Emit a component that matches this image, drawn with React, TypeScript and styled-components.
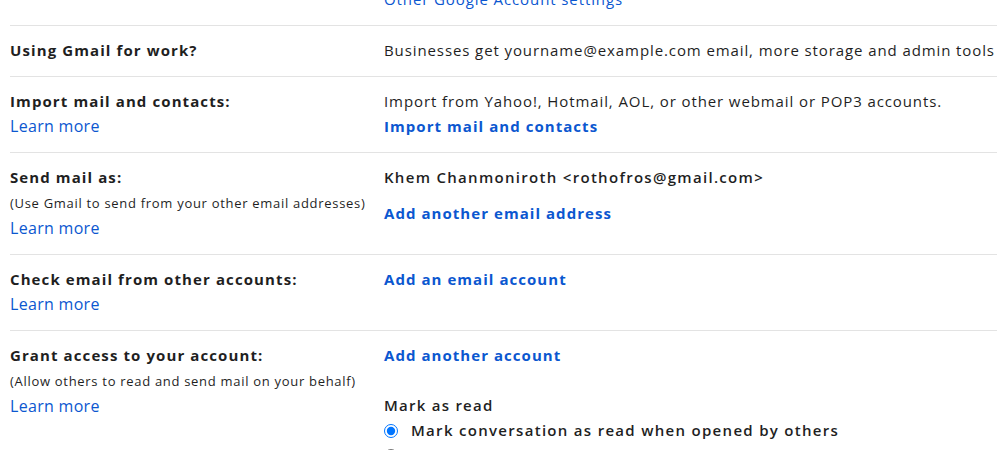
import React from "react";
import styled, { createGlobalStyle } from "styled-components";

const Global = createGlobalStyle`
  html, body {
    margin: 0;
    padding: 0;
    overflow: hidden;
    background: #ffffff;
  }
  body {
    font-family: "Open Sans", "Liberation Sans", sans-serif;
    color: #1f1f1f;
  }
`;

const Page = styled.div`
  margin-top: -75px;
  padding-left: 10px;
  width: 1300px;
`;

const Row = styled.div`
  display: grid;
  grid-template-columns: 374px 1fr;
  padding: 12px 0 13px;
  border-bottom: 1px solid #e3e3e3;
  line-height: 25px;
`;

const LabelCol = styled.div`
  display: flex;
  flex-direction: column;
`;

const Label = styled.div`
  font-size: 15px;
  font-weight: 700;
  letter-spacing: 1.1px;
  color: #1f1f1f;
`;

const Note = styled.div`
  font-size: 13px;
  line-height: 26px;
  letter-spacing: 0.7px;
  color: #1f1f1f;
`;

const LearnMore = styled.a`
  font-size: 16px;
  letter-spacing: 0.3px;
  color: #0b57d0;
  text-decoration: none;
  width: fit-content;
`;

const ValueCol = styled.div`
  display: flex;
  flex-direction: column;
  align-items: flex-start;
  white-space: nowrap;
`;

const Text = styled.div<{ $strong?: boolean }>`
  font-size: 15px;
  font-weight: ${(p) => (p.$strong ? 600 : 400)};
  letter-spacing: ${(p) => (p.$strong ? 1.3 : 0.9)}px;
`;

const Link = styled.a<{ $bold?: boolean; $gap?: number }>`
  font-size: 15px;
  font-weight: ${(p) => (p.$bold ? 700 : 400)};
  letter-spacing: ${(p) => (p.$bold ? 1.05 : 0.9)}px;
  color: #0b57d0;
  text-decoration: none;
  margin-top: ${(p) => p.$gap ?? 0}px;
`;

const SubHeading = styled.div`
  font-size: 15px;
  font-weight: 600;
  letter-spacing: 1.25px;
  margin-top: 25px;
`;

const RadioRow = styled.label`
  display: flex;
  align-items: center;
  gap: 13px;
  font-size: 15px;
  font-weight: 600;
  letter-spacing: 1.3px;
`;

const Radio = styled.input`
  margin: 0;
  width: 14px;
  height: 14px;
`;

export default function App() {
  return (
    <>
      <Global />
      <Page>
        <Row>
          <LabelCol>
            <Label>Change account settings:</Label>
          </LabelCol>
          <ValueCol>
            <Link>Change password</Link>
            <Link>Change password recovery options</Link>
            <Link>Other Google Account settings</Link>
          </ValueCol>
        </Row>

        <Row>
          <LabelCol>
            <Label>Using Gmail for work?</Label>
          </LabelCol>
          <ValueCol>
            <Text>Businesses get yourname@example.com email, more storage and admin tools</Text>
          </ValueCol>
        </Row>

        <Row>
          <LabelCol>
            <Label>Import mail and contacts:</Label>
            <LearnMore>Learn more</LearnMore>
          </LabelCol>
          <ValueCol>
            <Text>Import from Yahoo!, Hotmail, AOL, or other webmail or POP3 accounts.</Text>
            <Link $bold>Import mail and contacts</Link>
          </ValueCol>
        </Row>

        <Row>
          <LabelCol>
            <Label>Send mail as:</Label>
            <Note>(Use Gmail to send from your other email addresses)</Note>
            <LearnMore>Learn more</LearnMore>
          </LabelCol>
          <ValueCol>
            <Text $strong>Khem Chanmoniroth &lt;rothofros@gmail.com&gt;</Text>
            <Link $bold $gap={11}>Add another email address</Link>
          </ValueCol>
        </Row>

        <Row>
          <LabelCol>
            <Label>Check email from other accounts:</Label>
            <LearnMore>Learn more</LearnMore>
          </LabelCol>
          <ValueCol>
            <Link $bold>Add an email account</Link>
          </ValueCol>
        </Row>

        <Row>
          <LabelCol>
            <Label>Grant access to your account:</Label>
            <Note>(Allow others to read and send mail on your behalf)</Note>
            <LearnMore>Learn more</LearnMore>
          </LabelCol>
          <ValueCol>
            <Link $bold>Add another account</Link>
            <SubHeading>Mark as read</SubHeading>
            <RadioRow>
              <Radio type="radio" name="markread" defaultChecked />
              Mark conversation as read when opened by others
            </RadioRow>
            <RadioRow>
              <Radio type="radio" name="markread" />
              Leave conversation unread when opened by others
            </RadioRow>
          </ValueCol>
        </Row>
      </Page>
    </>
  );
}
